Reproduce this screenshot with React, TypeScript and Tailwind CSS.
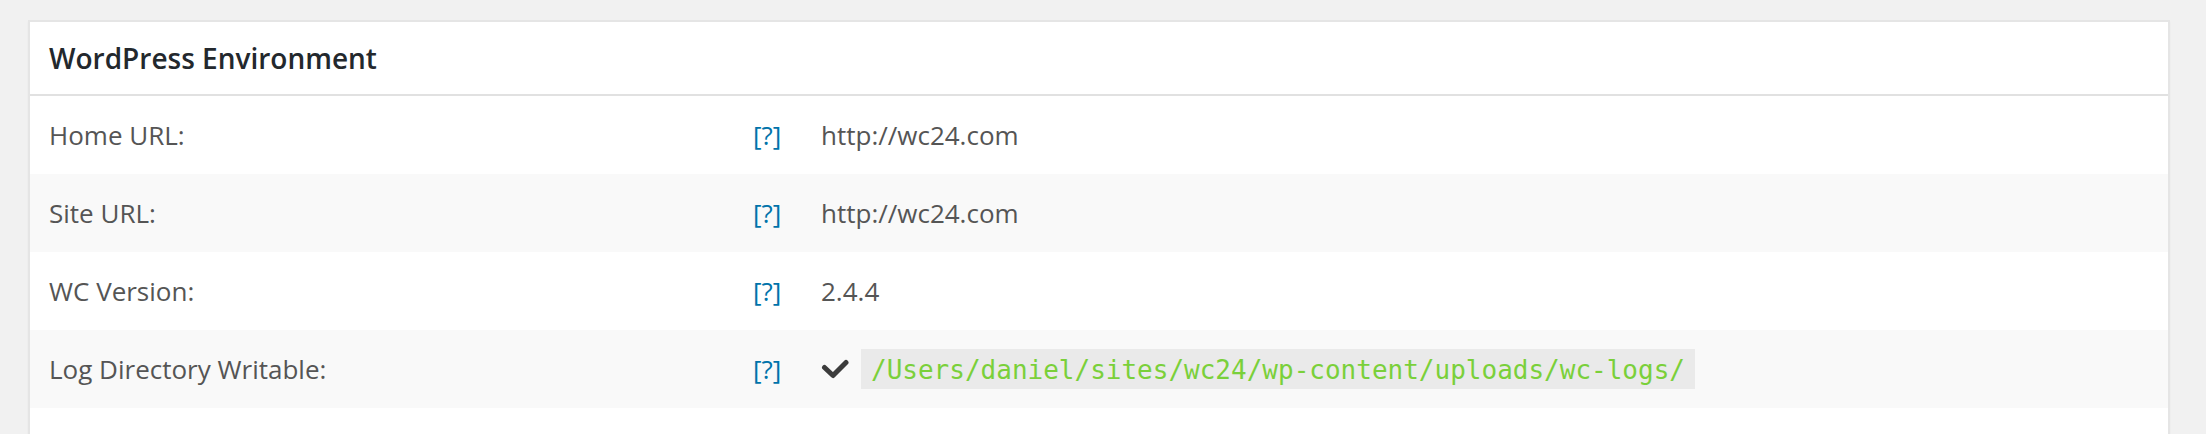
const rows = [
  { label: 'Home URL:', value: 'http://wc24.com' },
  { label: 'Site URL:', value: 'http://wc24.com' },
  { label: 'WC Version:', value: '2.4.4' },
  { label: 'Log Directory Writable:', value: null },
]

const CheckIcon = () => (
  <svg width="28" height="20" viewBox="0 0 28 20" className="shrink-0">
    <polyline
      points="3.5,8.5 12,16.5 25,3.5"
      fill="none"
      stroke="#3c3c3c"
      strokeWidth="5"
      strokeLinecap="round"
      strokeLinejoin="round"
    />
  </svg>
)

export default function App() {
  return (
    <div className="h-[434px] overflow-hidden bg-[#f1f1f1] pl-[28px] pr-[36px] pt-[20px] font-['Open_Sans',sans-serif]">
      <div className="border-2 border-b-0 border-[#e5e5e5] bg-white shadow-[0_2px_2px_rgba(0,0,0,0.04)]">
        <div className="flex h-[74px] items-center border-b-2 border-[#e1e1e1] pl-[19px]">
          <h2 className="text-[28px] font-semibold text-[#23282d]">WordPress Environment</h2>
        </div>
        {rows.map((row, i) => (
          <div
            key={row.label}
            className={`flex h-[78px] items-center text-[26px] text-[#555] ${i % 2 === 1 ? 'bg-[#f9f9f9]' : 'bg-white'}`}
          >
            <div className="w-[703px] shrink-0 pl-[19px]">{row.label}</div>
            <div className="w-[68px] shrink-0 pl-5 text-[#0073aa]">[?]</div>
            <div className="flex items-center gap-3 pl-5">
              {row.value ? (
                row.value
              ) : (
                <>
                  <CheckIcon />
                  <code className="bg-[#eaeaea] px-[10px] pb-[4px] pt-[6px] font-['DejaVu_Sans_Mono',monospace] text-[26px] leading-[30px] text-[#7ad03a]">
                    /Users/daniel/sites/wc24/wp-content/uploads/wc-logs/
                  </code>
                </>
              )}
            </div>
          </div>
        ))}
        <div className="h-[60px] bg-white" />
      </div>
    </div>
  )
}
